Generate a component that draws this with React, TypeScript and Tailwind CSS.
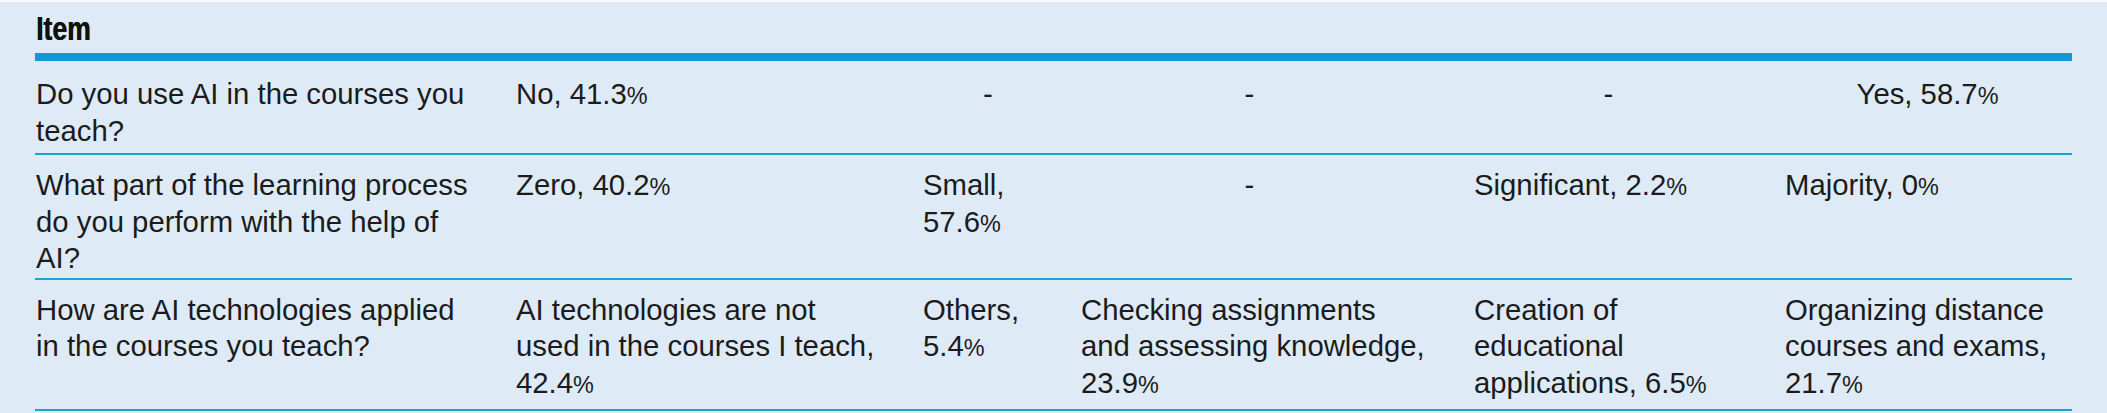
import React from "react";

const P = () => <span className="text-[0.8em]">%</span>;

type Cell = { lines: React.ReactNode[]; center?: boolean; pr?: string };

const cols = "grid grid-cols-[480px_407px_158px_393px_311px_288px]";

function Row({ cells, pt, pb }: { cells: Cell[]; pt: string; pb: string }) {
  return (
    <div className={`${cols} border-b-[2px] border-[#22a0d2]`}>
      {cells.map((c, i) => (
        <div
          key={i}
          className={`${pt} ${pb} pl-[1px] ${c.pr ?? (i === 5 ? "pr-[2px]" : "pr-[41px]")} ${c.center ? "text-center" : "text-left"}`}
        >
          {c.lines.map((l, j) => (
            <div key={j}>{l}</div>
          ))}
        </div>
      ))}
    </div>
  );
}

export default function App() {
  return (
    <div
      className="w-[2107px] h-[413px] bg-[#deebf7] text-[#1b1b1b] overflow-hidden"
      style={{ fontFamily: '"Liberation Sans", Arial, sans-serif' }}
    >
      <div className="h-[2px] bg-[#f4f8fc]" />
      <div className="ml-[35px] w-[2037px]">
        <div className="pt-[9px] pb-[7px] pl-[1px] text-[34px] leading-[35px] font-bold text-[#111]">
          <span className="inline-block origin-left scale-x-[0.78] [text-shadow:0.6px_0_0_#111]">Item</span>
        </div>
        <div className="h-[8px] bg-[#1296d5]" />
        <div className="text-[29.3px] leading-[36.5px]">
          <Row
            pt="pt-[15px]"
            pb="pb-[4px]"
            cells={[
              { lines: ["Do you use AI in the courses you", "teach?"] },
              { lines: [<>No, 41.3<P /></>] },
              { lines: ["-"], center: true, pr: "pr-[27px]" },
              { lines: ["-"], center: true, pr: "pr-[55px]" },
              { lines: ["-"], center: true },
              { lines: [<>Yes, 58.7<P /></>], center: true },
            ]}
          />
          <Row
            pt="pt-[12px]"
            pb="pb-[1px]"
            cells={[
              { lines: ["What part of the learning process", "do you perform with the help of", "AI?"] },
              { lines: [<>Zero, 40.2<P /></>] },
              { lines: ["Small,", <>57.6<P /></>] },
              { lines: ["-"], center: true, pr: "pr-[55px]" },
              { lines: [<>Significant, 2.2<P /></>] },
              { lines: [<>Majority, 0<P /></>] },
            ]}
          />
          <Row
            pt="pt-[12px]"
            pb="pb-[6px]"
            cells={[
              { lines: ["How are AI technologies applied", "in the courses you teach?"] },
              { lines: ["AI technologies are not", "used in the courses I teach,", <>42.4<P /></>] },
              { lines: ["Others,", <>5.4<P /></>] },
              { lines: ["Checking assignments", "and assessing knowledge,", <>23.9<P /></>] },
              { lines: ["Creation of", "educational", <>applications, 6.5<P /></>] },
              { lines: ["Organizing distance", "courses and exams,", <>21.7<P /></>] },
            ]}
          />
        </div>
      </div>
    </div>
  );
}
